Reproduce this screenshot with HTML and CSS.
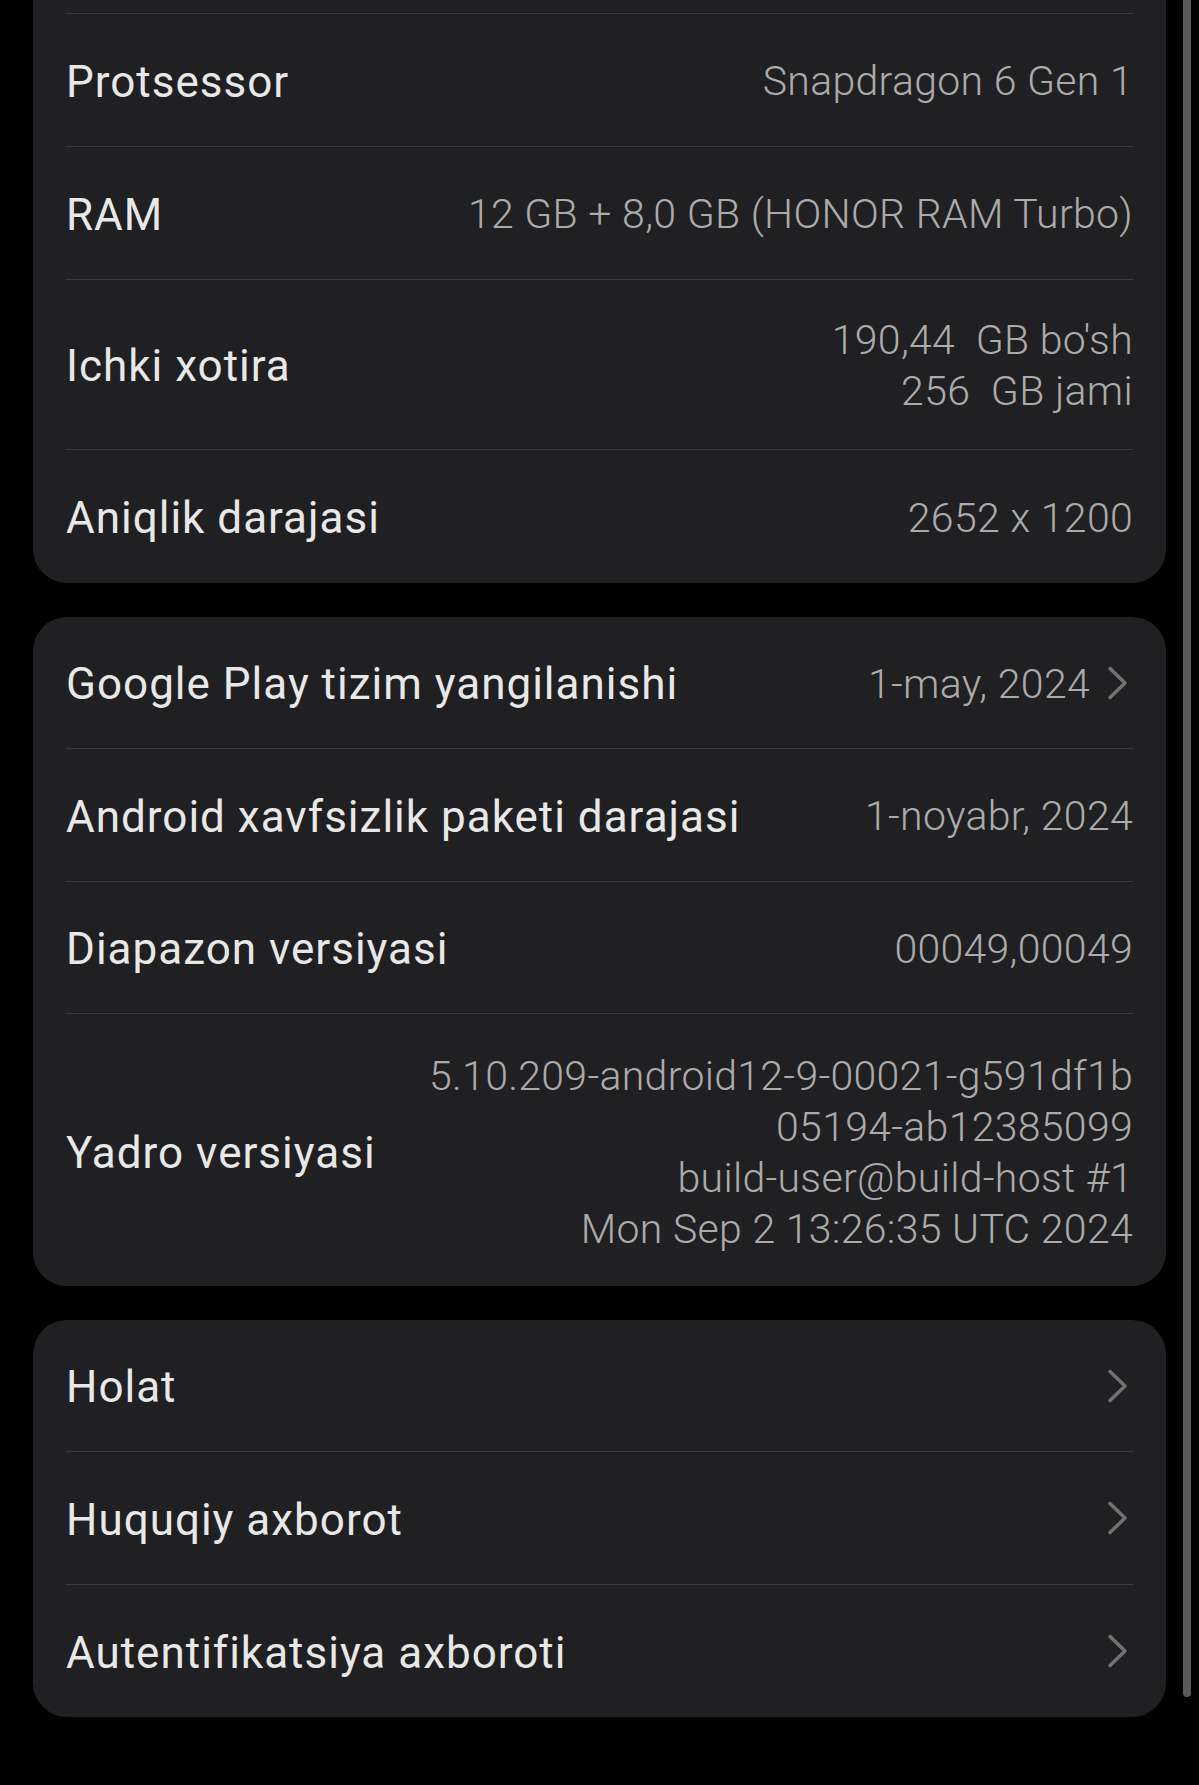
FILE: index.html
```html
<!DOCTYPE html>
<html lang="uz">
<head>
<meta charset="utf-8">
<title>Telefon haqida</title>
<link rel="stylesheet" href="styles.css">
</head>
<body>
<main class="page">
  <section class="card card-first">
    <div class="row row-first">
      <span class="label">Protsessor</span>
      <span class="value">Snapdragon 6 Gen 1</span>
    </div>
    <div class="row">
      <span class="label">RAM</span>
      <span class="value">12 GB + 8,0 GB (HONOR RAM Turbo)</span>
    </div>
    <div class="row row-tall">
      <span class="label">Ichki xotira</span>
      <span class="value multi">190,44  GB bo'sh
256  GB jami</span>
    </div>
    <div class="row">
      <span class="label">Aniqlik darajasi</span>
      <span class="value">2652 x 1200</span>
    </div>
  </section>

  <section class="card">
    <div class="row row-short">
      <span class="label">Google Play tizim yangilanishi</span>
      <span class="value-wrap">
        <span class="value">1-may, 2024</span>
        <svg class="chev" viewBox="0 0 22 36" width="22" height="36" aria-hidden="true"><path d="M4 3.5 L19 18 L4 32.5"/></svg>
      </span>
    </div>
    <div class="row">
      <span class="label">Android xavfsizlik paketi darajasi</span>
      <span class="value">1-noyabr, 2024</span>
    </div>
    <div class="row row-short">
      <span class="label">Diapazon versiyasi</span>
      <span class="value">00049,00049</span>
    </div>
    <div class="row row-kernel">
      <span class="label">Yadro versiyasi</span>
      <span class="value multi">5.10.209-android12-9-00021-g591df1b
05194-ab12385099
build-user@build-host #1
Mon Sep 2 13:26:35 UTC 2024</span>
    </div>
  </section>

  <section class="card">
    <div class="row row-short">
      <span class="label">Holat</span>
      <svg class="chev" viewBox="0 0 22 36" width="22" height="36" aria-hidden="true"><path d="M4 3.5 L19 18 L4 32.5"/></svg>
    </div>
    <div class="row">
      <span class="label">Huquqiy axborot</span>
      <svg class="chev" viewBox="0 0 22 36" width="22" height="36" aria-hidden="true"><path d="M4 3.5 L19 18 L4 32.5"/></svg>
    </div>
    <div class="row row-short">
      <span class="label">Autentifikatsiya axboroti</span>
      <svg class="chev" viewBox="0 0 22 36" width="22" height="36" aria-hidden="true"><path d="M4 3.5 L19 18 L4 32.5"/></svg>
    </div>
  </section>
</main>
<div class="scrollbar"></div>
</body>
</html>
```

FILE: styles.css
```css
html, body {
  margin: 0;
  padding: 0;
  background: #000;
}

body {
  width: 1199px;
  height: 1785px;
  overflow: hidden;
  font-family: Roboto, "Noto Sans", sans-serif;
}

.page {
  display: flex;
  flex-direction: column;
  gap: 34px;
  padding: 0 33px;
}

.card {
  background: #202022;
  border-radius: 34px;
  padding: 0 33px;
}

.card-first {
  margin-top: -60px;
  padding-top: 73px;
  border-radius: 0 0 34px 34px;
}

.row {
  display: flex;
  align-items: center;
  justify-content: space-between;
  gap: 24px;
  min-height: 133px;
  box-sizing: border-box;
  border-bottom: 1px solid #3a3a3c;
}

.row-first {
  min-height: 134px;
  border-top: 1px solid #3a3a3c;
}

.row-short {
  min-height: 132px;
}

.row:last-child {
  border-bottom: none;
}

.row-tall {
  padding: 32px 0;
}

.row-kernel {
  padding: 34px 0 31px;
}

.label {
  color: #e8e8e8;
  font-size: 44px;
  font-weight: 400;
  letter-spacing: 1px;
  white-space: nowrap;
  padding-top: 3px;
}

.value {
  color: #ababab;
  font-size: 41px;
  font-weight: 300;
  line-height: 51px;
  letter-spacing: 0.3px;
  text-align: right;
  white-space: nowrap;
  padding-top: 3px;
}

.value.multi {
  white-space: pre;
}

.value-wrap {
  display: flex;
  align-items: center;
  gap: 16px;
}

.chev {
  flex: none;
  margin-right: 5px;
  fill: none;
  stroke: #727272;
  stroke-width: 3.5;
  stroke-linecap: round;
  stroke-linejoin: round;
}

.scrollbar {
  position: absolute;
  top: 0;
  left: 1183px;
  width: 8px;
  height: 1697px;
  background: #5a5a5a;
  border-radius: 0 0 4px 4px;
}
```
